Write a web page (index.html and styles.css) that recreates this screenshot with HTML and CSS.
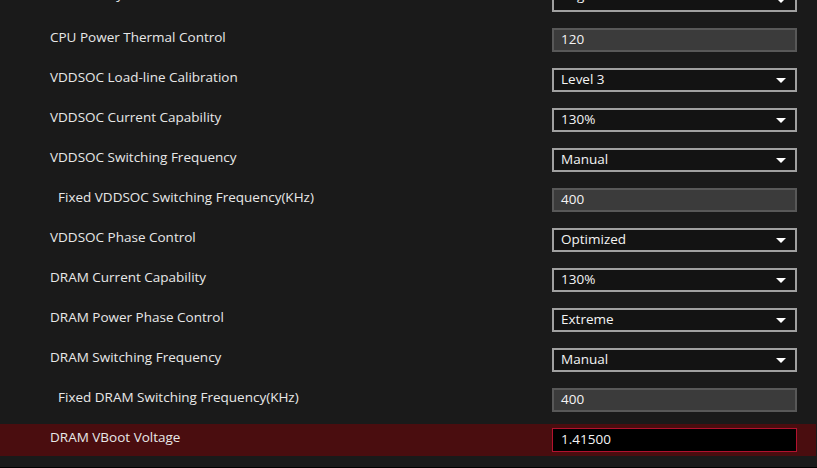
FILE: index.html
```html
<!DOCTYPE html>
<html lang="en">
<head>
<meta charset="utf-8">
<title>DIGI+ Power Control</title>
<link rel="stylesheet" href="styles.css">
</head>
<body>
<div class="screen">
  <div class="list">
    <div class="row partial">
      <span class="label">Power Duty Control</span>
      <div class="ctl select"><span class="val">Regular</span><span class="arrow"></span></div>
    </div>
    <div class="row">
      <span class="label">CPU Power Thermal Control</span>
      <div class="ctl input"><span class="val">120</span></div>
    </div>
    <div class="row">
      <span class="label">VDDSOC Load-line Calibration</span>
      <div class="ctl select"><span class="val">Level 3</span><span class="arrow"></span></div>
    </div>
    <div class="row">
      <span class="label">VDDSOC Current Capability</span>
      <div class="ctl select"><span class="val">130%</span><span class="arrow"></span></div>
    </div>
    <div class="row">
      <span class="label">VDDSOC Switching Frequency</span>
      <div class="ctl select"><span class="val">Manual</span><span class="arrow"></span></div>
    </div>
    <div class="row">
      <span class="label sub">Fixed VDDSOC Switching Frequency(KHz)</span>
      <div class="ctl input"><span class="val">400</span></div>
    </div>
    <div class="row">
      <span class="label">VDDSOC Phase Control</span>
      <div class="ctl select"><span class="val">Optimized</span><span class="arrow"></span></div>
    </div>
    <div class="row">
      <span class="label">DRAM Current Capability</span>
      <div class="ctl select"><span class="val">130%</span><span class="arrow"></span></div>
    </div>
    <div class="row">
      <span class="label">DRAM Power Phase Control</span>
      <div class="ctl select"><span class="val">Extreme</span><span class="arrow"></span></div>
    </div>
    <div class="row">
      <span class="label">DRAM Switching Frequency</span>
      <div class="ctl select"><span class="val">Manual</span><span class="arrow"></span></div>
    </div>
    <div class="row">
      <span class="label sub">Fixed DRAM Switching Frequency(KHz)</span>
      <div class="ctl input"><span class="val">400</span></div>
    </div>
    <div class="row active">
      <span class="label">DRAM VBoot Voltage</span>
      <div class="ctl edit"><span class="val">1.41500</span></div>
    </div>
  </div>
</div>
</body>
</html>
```

FILE: styles.css
```css
html, body {
  margin: 0;
  padding: 0;
  background: #1a1a1a;
}

.screen {
  width: 817px;
  height: 468px;
  overflow: hidden;
  box-sizing: border-box;
  border-bottom: 1px solid #000;
  font-family: "Open Sans", "Noto Sans", sans-serif;
  font-size: 13.5px;
  color: #e8e8e8;
}

.list {
  margin-top: -16px;
}

.row {
  display: flex;
  align-items: center;
  justify-content: space-between;
  height: 32px;
  margin: 0 1px 8px 0;
  padding: 0 19px 0 50px;
}

.row.active {
  background: #4a0d0f;
}

.label {
  padding-bottom: 6px;
  white-space: nowrap;
}

.label.sub {
  padding-left: 8px;
}

.row.partial .label {
  padding-bottom: 12px;
}

.row.partial .val {
  padding-bottom: 9px;
}

.ctl {
  box-sizing: border-box;
  width: 245px;
  height: 24px;
  display: flex;
  align-items: center;
  justify-content: space-between;
  padding: 0 9px 2px 7px;
  color: #f4f4f4;
}

.ctl .val {
  white-space: nowrap;
}

.select {
  background: #131313;
  border: 2px solid #a0a0a0;
}

.input {
  background: #3b3b3b;
  border: 2px solid #585858;
}

.edit {
  background: #000;
  border: 1px solid #b3122f;
  padding-left: 8px;
}

.arrow {
  width: 0;
  height: 0;
  border-left: 5px solid transparent;
  border-right: 5px solid transparent;
  border-top: 5px solid #fff;
  margin-top: 2px;
}
```
